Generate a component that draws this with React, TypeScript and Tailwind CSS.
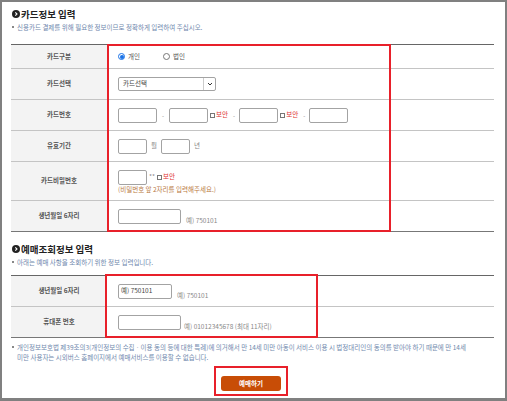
import React from 'react';

const font = { fontFamily: '"Noto Sans CJK KR", "Noto Sans", sans-serif' };

const SectionTitle: React.FC<{ children: React.ReactNode }> = ({ children }) => (
  <div className="flex items-center gap-[1px] pl-[1px] text-[9.5px] font-bold leading-[10px] text-[#222]">
    <svg width="8" height="8" viewBox="0 0 8 8" className="shrink-0">
      <circle cx="4" cy="4" r="4" fill="#222" />
      <path d="M3.3 2.3 L5 4 L3.3 5.7" stroke="#fff" strokeWidth="1.1" fill="none" />
    </svg>
    <span>{children}</span>
  </div>
);

const Note: React.FC<{ children: React.ReactNode }> = ({ children }) => (
  <div className="flex items-start gap-[3px] pl-[1px] text-[6.5px] leading-[10px] text-[#7088ad]">
    <span className="mt-[4px] h-[2px] w-[2px] shrink-0 bg-[#888]" />
    <span>{children}</span>
  </div>
);

const Label: React.FC<{ children: React.ReactNode }> = ({ children }) => (
  <div className="flex w-[96px] shrink-0 items-center justify-center bg-[#f3f3f3] text-[6.5px] font-bold text-[#555]">
    {children}
  </div>
);

const Row: React.FC<{ label: string; h: string; last?: boolean; children: React.ReactNode }> = ({
  label,
  h,
  last,
  children,
}) => (
  <div className={`flex ${h} ${last ? '' : 'border-b border-[#c4c4c4]'}`}>
    <Label>{label}</Label>
    <div className="flex flex-1 items-center pl-[11px]">{children}</div>
  </div>
);

const Box: React.FC<{ w: string; children?: React.ReactNode }> = ({ w, children }) => (
  <div
    className={`${w} flex h-[15px] items-center rounded-[2px] border border-[#a3a3a3] bg-white pl-[2px] text-[6.5px] text-[#444]`}
  >
    {children}
  </div>
);

const Dash: React.FC<{ m?: string }> = ({ m = 'mx-[5px]' }) => (
  <span className={`${m} text-[6px] text-[#888]`}>-</span>
);

const Secure = () => (
  <span className="flex items-center text-[6.5px] text-[#e03030]">
    <span className="mr-[1px] h-[5px] w-[5px] border border-[#777] bg-white" />
    보안
  </span>
);

const Hint: React.FC<{ children: React.ReactNode }> = ({ children }) => (
  <span className="text-[6.5px] text-[#888]">{children}</span>
);

export default function App() {
  return (
    <div
      style={font}
      className="h-[401px] w-[507px] border-t-2 border-r-2 border-b-[3px] border-l-2 border-[#808080] bg-white pr-[11px] pl-[9px]"
    >
      <div className="pt-[7px]">
        <SectionTitle>카드정보 입력</SectionTitle>
      </div>
      <div className="mt-[3px]">
        <Note>신용카드 결제를 위해 필요한 정보이므로 정확하게 입력하여 주십시오.</Note>
      </div>

      <div className="relative mt-[12px] border-t border-b border-t-[#666] border-b-[#777]">
        <Row label="카드구분" h="h-[24px]">
          <label className="flex items-center gap-[3px] text-[6.5px] text-[#555]">
            <span className="flex h-[7px] w-[7px] items-center justify-center rounded-full border border-[#1a73e8]">
              <span className="h-[4px] w-[4px] rounded-full bg-[#1a73e8]" />
            </span>
            개인
          </label>
          <label className="ml-[23px] flex items-center gap-[3px] text-[6.5px] text-[#555]">
            <span className="h-[7px] w-[7px] rounded-full border border-[#777]" />
            법인
          </label>
        </Row>
        <Row label="카드선택" h="h-[31px]">
          <div className="flex h-[14px] w-[98px] items-center rounded-[2px] border border-[#a3a3a3] text-[6.5px] text-[#444]">
            <span className="flex-1 pl-[4px]">카드선택</span>
            <span className="flex h-full w-[12px] items-center justify-center border-l border-[#ccc]">
              <svg width="6" height="4" viewBox="0 0 6 4">
                <path d="M1 1 L3 3 L5 1" stroke="#333" strokeWidth="1" fill="none" />
              </svg>
            </span>
          </div>
        </Row>
        <Row label="카드번호" h="h-[31px]">
          <Box w="w-[39px]" />
          <Dash />
          <Box w="w-[39px]" />
          <span className="ml-[2px]">
            <Secure />
          </span>
          <Dash m="ml-[5px] mr-[4px]" />
          <Box w="w-[39px]" />
          <span className="ml-[2px]">
            <Secure />
          </span>
          <Dash m="ml-[5px] mr-[4px]" />
          <Box w="w-[39px]" />
        </Row>
        <Row label="유효기간" h="h-[31px]">
          <Box w="w-[29px]" />
          <span className="mx-[4px] text-[6.5px] text-[#888]">월</span>
          <Box w="w-[29px]" />
          <span className="ml-[4px] text-[6.5px] text-[#888]">년</span>
        </Row>
        <Row label="카드비밀번호" h="h-[39px]">
          <div className="flex flex-col pt-[1px]">
            <div className="flex items-center">
              <Box w="w-[29px]" />
              <span className="mx-[2px] text-[6.5px] text-[#888]">**</span>
              <Secure />
            </div>
            <span className="text-[6.5px] leading-[9px] text-[#b9793f]">
              (비밀번호 앞 2자리를 입력해주세요.)
            </span>
          </div>
        </Row>
        <Row label="생년월일 6자리" h="h-[30px]" last>
          <Box w="w-[63px]" />
          <span className="ml-[5px]">
            <Hint>예) 750101</Hint>
          </span>
        </Row>
        <div className="absolute top-[-1px] left-[96px] h-[188px] w-[284px] border-2 border-[#e8202a]" />
      </div>

      <div className="mt-[12px]">
        <SectionTitle>예매조회정보 입력</SectionTitle>
      </div>
      <div className="mt-[3px]">
        <Note>아래는 예매 사항을 조회하기 위한 정보 입력입니다.</Note>
      </div>

      <div className="relative mt-[8px] border-t border-b border-t-[#666] border-b-[#777]">
        <Row label="생년월일 6자리" h="h-[31px]">
          <Box w="w-[54px]">예) 750101</Box>
          <span className="ml-[5px]">
            <Hint>예) 750101</Hint>
          </span>
        </Row>
        <Row label="휴대폰 번호" h="h-[30px]" last>
          <Box w="w-[63px]" />
          <span className="ml-[3px]">
            <Hint>예) 01012345678 (최대 11자리)</Hint>
          </span>
        </Row>
        <div className="absolute top-[-2px] left-[94px] h-[64px] w-[213px] border-2 border-[#e8202a]" />
      </div>

      <div className="mt-[4px]">
        <Note>
          개인정보보호법 제39조의3(개인정보의 수집ㆍ이용 동의 등에 대한 특례)에 의거해서 만 14세 미만 아동이 서비스 이용 시 법정대리인의 동의를 받아야 하기 때문에 만 14세
          <br />
          미만 사용자는 시외버스 홈페이지에서 예매서비스를 이용할 수 없습니다.
        </Note>
      </div>

      <div className="mt-[4px] flex justify-center pr-[3px]">
        <div className="border-2 border-[#e8202a] px-[5px] pt-[8px] pb-[3px]">
          <button className="flex h-[15px] w-[60px] items-center justify-center rounded-[3px] bg-[#c84d06] text-[6.5px] font-bold text-white">
            예매하기
          </button>
        </div>
      </div>
    </div>
  );
}
